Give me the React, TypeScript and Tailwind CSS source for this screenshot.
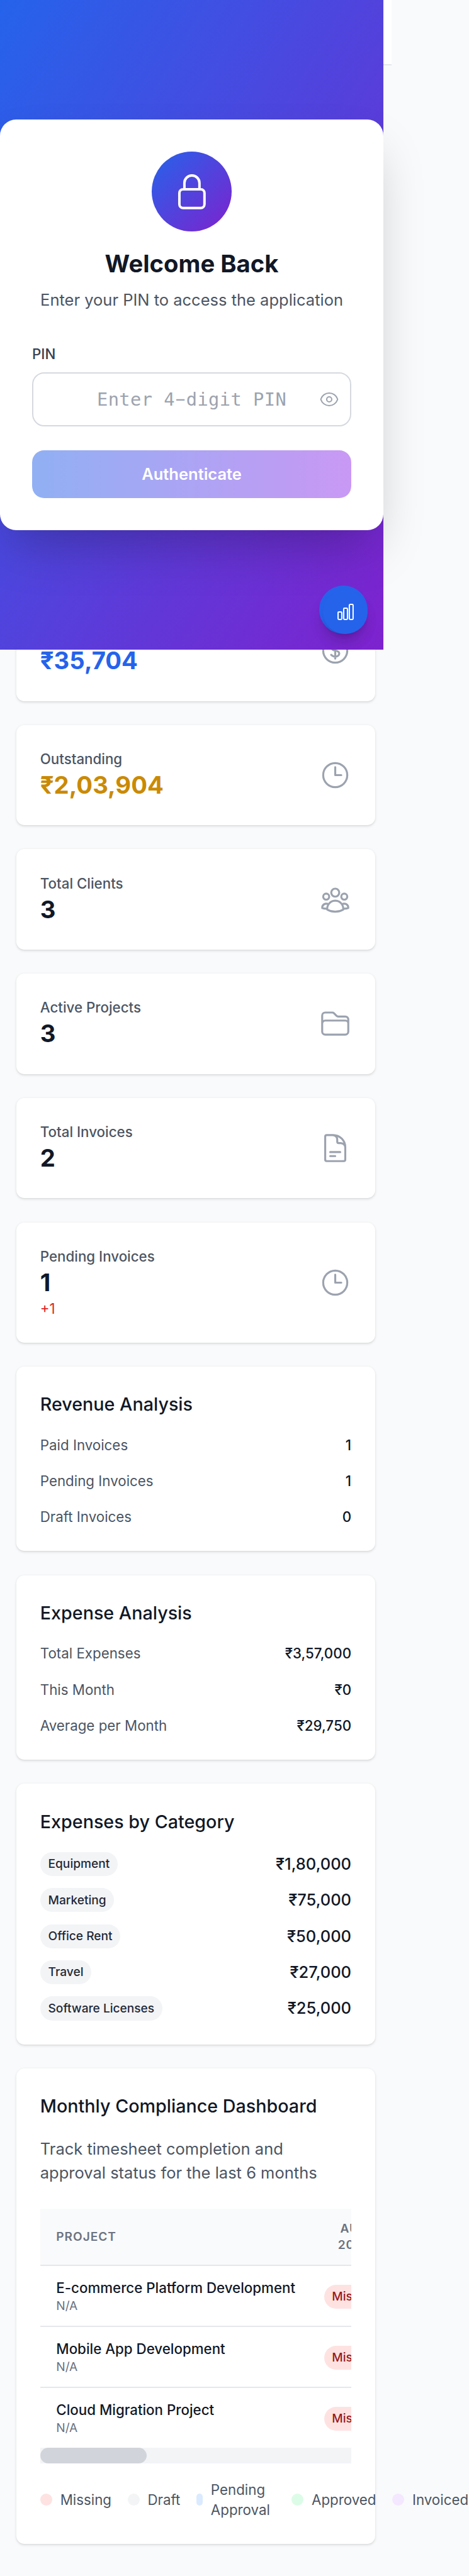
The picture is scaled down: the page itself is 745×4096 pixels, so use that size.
import type { ReactNode } from "react";
import type { IconType } from "react-icons";
import {
  HiOutlineChartBar,
  HiOutlineClock,
  HiOutlineCurrencyDollar,
  HiOutlineDocumentText,
  HiOutlineEye,
  HiOutlineFolder,
  HiOutlineLockClosed,
  HiOutlineUserGroup,
} from "react-icons/hi2";

function Card({ children }: { children: ReactNode }) {
  return (
    <section className="rounded-lg bg-white p-6 shadow-[0_1px_3px_0_rgba(0,0,0,0.1),0_1px_2px_-1px_rgba(0,0,0,0.1)]">
      {children}
    </section>
  );
}

type Stat = {
  label: string;
  value: string;
  color: string;
  change?: string;
  icon: IconType;
};

const stats: Stat[] = [
  { label: "", value: "₹35,704", color: "text-[#2563eb]", icon: HiOutlineCurrencyDollar },
  { label: "Outstanding", value: "₹2,03,904", color: "text-[#ca8a04]", icon: HiOutlineClock },
  { label: "Total Clients", value: "3", color: "text-[#111827]", icon: HiOutlineUserGroup },
  { label: "Active Projects", value: "3", color: "text-[#111827]", icon: HiOutlineFolder },
  { label: "Total Invoices", value: "2", color: "text-[#111827]", icon: HiOutlineDocumentText },
  { label: "Pending Invoices", value: "1", color: "text-[#111827]", change: "+1", icon: HiOutlineClock },
];

function StatCard({ label, value, color, change, icon: Icon }: Stat) {
  return (
    <Card>
      <div className="flex items-center justify-between">
        <div>
          <p className="h-5 text-sm font-medium text-[#4b5563]">{label}</p>
          <p className={`text-2xl font-bold ${color}`}>{value}</p>
          {change && <p className="text-sm text-[#dc2626]">{change}</p>}
        </div>
        <Icon className="size-8 text-[#9ca3af]" />
      </div>
    </Card>
  );
}

function Analysis({ title, rows }: { title: string; rows: [string, string][] }) {
  return (
    <Card>
      <h3 className="mb-4 text-lg font-medium text-[#111827]">{title}</h3>
      <div className="flex flex-col gap-4">
        {rows.map(([name, value]) => (
          <div key={name} className="flex justify-between text-sm">
            <span className="text-[#4b5563]">{name}</span>
            <span className="font-medium text-[#111827]">{value}</span>
          </div>
        ))}
      </div>
    </Card>
  );
}

const categories = [
  ["Equipment", "₹1,80,000"],
  ["Marketing", "₹75,000"],
  ["Office Rent", "₹50,000"],
  ["Travel", "₹27,000"],
  ["Software Licenses", "₹25,000"],
];

function Categories() {
  return (
    <Card>
      <h3 className="mb-4 text-lg font-medium text-[#111827]">Expenses by Category</h3>
      <div className="flex flex-col gap-3">
        {categories.map(([name, value]) => (
          <div key={name} className="flex items-center justify-between">
            <span className="rounded-full bg-[#f3f4f6] px-2 py-1 text-xs font-medium text-[#1f2937]">{name}</span>
            <span className="font-medium text-[#111827]">{value}</span>
          </div>
        ))}
      </div>
    </Card>
  );
}

const projects = [
  { name: "E-commerce Platform Development", row: "h-[60.75px] border-b-[1.3px]" },
  { name: "Mobile App Development", row: "h-[60.7px] border-b-[1.3px]" },
  { name: "Cloud Migration Project", row: "h-[59.55px]" },
];

function Compliance() {
  return (
    <Card>
      <h3 className="mb-4 text-lg font-medium text-[#111827]">Monthly Compliance Dashboard</h3>
      <p className="mb-6 text-base text-[#4b5563]">
        Track timesheet completion and
        <br />
        approval status for the last 6 months
      </p>
      <div className="overflow-hidden">
        <div className="w-[360px]">
          <div className="flex h-[57px] items-center border-b-[1.3px] border-[#e5e7eb] bg-[#f9fafb] text-xs font-semibold tracking-wider text-[#6b7280]">
            <div className="w-[266px] shrink-0 pl-4">PROJECT</div>
            <div className="w-[94px] shrink-0 text-center">
              AUG
              <br />
              2025
            </div>
          </div>
          {projects.map(({ name, row }) => (
            <div key={name} className={`flex items-start border-[#e5e7eb] ${row}`}>
              <div className="w-[266px] shrink-0 whitespace-nowrap pl-4 pt-3">
                <div className="text-sm font-medium text-[#111827]">{name}</div>
                <div className="text-xs text-[#6b7280]">N/A</div>
              </div>
              <div className="flex w-[94px] shrink-0 justify-center pt-[18.7px]">
                <span className="rounded-full bg-[#fee2e2] px-2 py-1 text-xs font-medium text-[#991b1b]">Missing</span>
              </div>
            </div>
          ))}
        </div>
        <div className="h-4 bg-[#f3f4f6]">
          <div className="h-4 w-[106px] rounded-full bg-[#d1d5db]" />
        </div>
      </div>
      <div className="mt-4 flex items-center gap-4 text-sm text-[#4b5563]">
        <Legend dot="w-3 bg-[#fee2e2]">Missing</Legend>
        <Legend dot="w-3 bg-[#f3f4f6]">Draft</Legend>
        <Legend dot="w-[6.5px] bg-[#dbeafe]">
          <span className="block w-[64.5px]">Pending Approval</span>
        </Legend>
        <Legend dot="w-3 bg-[#dcfce7]">Approved</Legend>
        <Legend dot="w-3 bg-[#f3e8ff]">Invoiced</Legend>
      </div>
    </Card>
  );
}

function Legend({ dot, children }: { dot: string; children: ReactNode }) {
  return (
    <div className="flex shrink-0 items-center gap-2">
      <span className={`h-3 shrink-0 rounded-full ${dot}`} />
      <span>{children}</span>
    </div>
  );
}

function PinOverlay() {
  return (
    <div className="absolute left-0 top-0 flex h-[648px] w-[382px] flex-col justify-center bg-linear-to-br/srgb from-[#2563eb] to-[#7e22ce]">
      <div className="rounded-2xl bg-white p-8 shadow-[0_25px_50px_-12px_rgba(0,0,0,0.25)]">
        <div className="mx-auto mb-4 flex size-20 items-center justify-center rounded-full bg-linear-to-br/srgb from-[#2563eb] to-[#7e22ce]">
          <HiOutlineLockClosed className="size-10 text-white" />
        </div>
        <h1 className="mb-2 text-center text-2xl font-bold text-[#111827]">Welcome Back</h1>
        <p className="mb-8 text-center text-base text-[#4b5563]">Enter your PIN to access the application</p>
        <div className="mb-2 text-sm font-medium text-[#374151]">PIN</div>
        <div className="relative mb-6 flex h-[54px] items-center justify-center rounded-xl border-[1.3px] border-[#d5d9df]">
          <span className="whitespace-pre pt-px font-['DejaVu_Sans_Mono',monospace] text-lg tracking-[0.28px] text-[#9ca3af]">
            Enter 4<span className="inline-block -translate-y-[0.6px] scale-x-[1.8]">-</span>digit PIN
          </span>
          <HiOutlineEye className="absolute right-[11px] top-4 size-5 text-[#9ca3af]" />
        </div>
        <button className="block h-12 w-full rounded-xl bg-linear-to-r/srgb from-[#2563eb] to-[#9333ea] text-base font-semibold text-white opacity-50">
          Authenticate
        </button>
      </div>
      <div className="absolute bottom-4 right-4 flex size-12 items-end justify-end rounded-full bg-[#2563eb] shadow-[0_10px_15px_-3px_rgba(0,0,0,0.1),0_4px_6px_-4px_rgba(0,0,0,0.1)]">
        <button className="flex size-11 items-center justify-center rounded-full bg-[#2563eb] shadow-[0_10px_15px_-3px_rgba(0,0,0,0.1),0_4px_6px_-4px_rgba(0,0,0,0.1)]">
          <HiOutlineChartBar className="size-5 text-white" />
        </button>
      </div>
    </div>
  );
}

export default function App() {
  return (
    <div className="h-[4096px] w-[745px] overflow-hidden bg-[#f9fafb]">
      <div className="relative h-[2569px] w-[467px] bg-[#f9fafb] font-['Inter',sans-serif] antialiased [zoom:1.5945]">
        <header className="h-[65px] w-[390px] border-b-[1.3px] border-[#e5e7eb] bg-white" />
        <main className="flex w-[390px] flex-col gap-6 px-4 pt-[534px]">
          {stats.map((s) => (
            <StatCard key={s.value + s.label} {...s} />
          ))}
          <Analysis
            title="Revenue Analysis"
            rows={[
              ["Paid Invoices", "1"],
              ["Pending Invoices", "1"],
              ["Draft Invoices", "0"],
            ]}
          />
          <Analysis
            title="Expense Analysis"
            rows={[
              ["Total Expenses", "₹3,57,000"],
              ["This Month", "₹0"],
              ["Average per Month", "₹29,750"],
            ]}
          />
          <Categories />
          <Compliance />
        </main>
        <PinOverlay />
      </div>
    </div>
  );
}
